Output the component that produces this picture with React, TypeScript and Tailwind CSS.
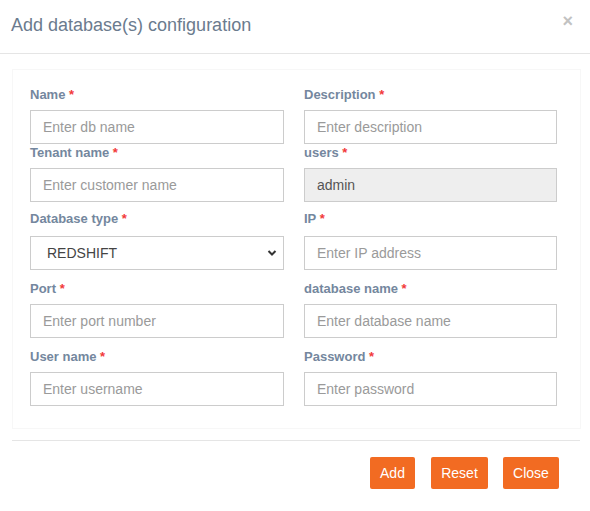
import React from "react";

const labelCls = "block h-[20px] leading-[20px] text-[13px] font-bold text-[#74879e]";
const inputBase =
  "block w-full h-[34px] border border-[#cccccc] px-[12px] text-[14px] placeholder:text-[#9a9a9a] outline-none";

function Label({ text }: { text: string }) {
  return (
    <label className={labelCls}>
      {text} <span className="text-[#f23a3a]">*</span>
    </label>
  );
}

function Field({ label, placeholder, gap = 5, value, disabled }: { label: string; placeholder?: string; gap?: number; value?: string; disabled?: boolean }) {
  return (
    <div>
      <Label text={label} />
      <div className={gap === 7 ? "mt-[7px]" : "mt-[5px]"}>
        <input
          className={inputBase + (disabled ? " bg-[#eeeeee] text-[#555]" : " bg-white text-[#555]")}
          placeholder={placeholder}
          defaultValue={value}
          readOnly={disabled}
        />
      </div>
    </div>
  );
}

export default function App() {
  return (
    <div
      className="w-[590px] h-[511px] bg-white overflow-hidden"
      style={{ fontFamily: '"Liberation Sans", Arial, sans-serif' }}
    >
      <div className="h-[54px] border-b border-[#e5e5e5] flex items-start justify-between">
        <h4 className="pl-[11px] pt-[13px] text-[18px] leading-[24px] text-[#6b7b8e] font-normal">
          Add database(s) configuration
        </h4>
        <span className="pr-[17px] pt-[10px] text-[18px] leading-[22px] font-bold text-[#c2c2c2]">×</span>
      </div>

      <div className="ml-[12px] mt-[15px] w-[569px] border border-[#f7f7f7] pl-[17px] pr-[23px] pt-[15px] pb-[22px]">
        <div className="grid grid-cols-[254px_253px] gap-x-[20px]">
          <Field label="Name" placeholder="Enter db name" />
          <Field label="Description" placeholder="Enter description" />
        </div>
        <div className="grid grid-cols-[254px_253px] gap-x-[20px] -mt-[1px]">
          <Field label="Tenant name" placeholder="Enter customer name" />
          <Field label="users" value="admin" disabled />
        </div>
        <div className="grid grid-cols-[254px_253px] gap-x-[20px] mt-[7px]">
          <div>
            <Label text="Database type" />
            <div className="mt-[7px] relative">
              <select
                className="block w-full h-[34px] border border-[#cccccc] bg-white pl-[16px] pr-[30px] text-[14px] text-[#444] outline-none appearance-none"
                defaultValue="REDSHIFT"
              >
                <option>REDSHIFT</option>
                <option>POSTGRES</option>
                <option>MYSQL</option>
              </select>
              <svg
                className="absolute right-[7px] top-[13px] pointer-events-none"
                width="10"
                height="8"
                viewBox="0 0 10 8"
              >
                <path d="M1.5 2 L5 5.5 L8.5 2" fill="none" stroke="#333" strokeWidth="2" />
              </svg>
            </div>
          </div>
          <Field label="IP" placeholder="Enter IP address" gap={7} />
        </div>
        <div className="grid grid-cols-[254px_253px] gap-x-[20px] mt-[9px]">
          <Field label="Port" placeholder="Enter port number" />
          <Field label="database name" placeholder="Enter database name" />
        </div>
        <div className="grid grid-cols-[254px_253px] gap-x-[20px] mt-[9px]">
          <Field label="User name" placeholder="Enter username" />
          <Field label="Password" placeholder="Enter password" />
        </div>
      </div>

      <div className="ml-[12px] mt-[11px] w-[568px] border-t border-[#e5e5e5] pt-[16px] flex justify-end pr-[21px] gap-[16px]">
        <button className="h-[32px] w-[45px] rounded-[2px] bg-[#f26b22] text-white text-[14px]">Add</button>
        <button className="h-[32px] w-[57px] rounded-[2px] bg-[#f26b22] text-white text-[14px]">Reset</button>
        <button className="h-[32px] w-[56px] rounded-[2px] bg-[#f26b22] text-white text-[14px] -ml-[1px]">Close</button>
      </div>
    </div>
  );
}
